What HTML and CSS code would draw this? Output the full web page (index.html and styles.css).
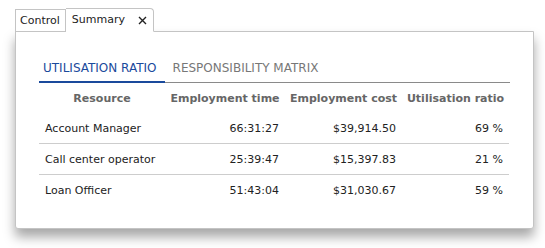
FILE: index.html
```html
<!DOCTYPE html>
<html>
<head>
<meta charset="utf-8">
<link rel="stylesheet" href="styles.css">
</head>
<body>
<div class="window">
  <div class="tabs">
    <div class="tab">Control</div>
    <div class="tab active">Summary
      <svg class="close" width="9" height="9" viewBox="0 0 9 9"><path d="M1 1 L8 8 M8 1 L1 8" stroke="#222" stroke-width="1.4" fill="none"/></svg>
    </div>
  </div>
  <div class="panel">
    <div class="subtabs">
      <div class="subtab selected">UTILISATION RATIO</div>
      <div class="subtab">RESPONSIBILITY MATRIX</div>
    </div>
    <table class="grid">
      <colgroup>
        <col class="c1"><col class="c2"><col class="c3"><col class="c4">
      </colgroup>
      <thead>
        <tr><th>Resource</th><th>Employment time</th><th>Employment cost</th><th>Utilisation ratio</th></tr>
      </thead>
      <tbody>
        <tr><td>Account Manager</td><td class="num">66:31:27</td><td class="num">$39,914.50</td><td class="num">69 %</td></tr>
        <tr><td>Call center operator</td><td class="num">25:39:47</td><td class="num">$15,397.83</td><td class="num">21 %</td></tr>
        <tr><td>Loan Officer</td><td class="num">51:43:04</td><td class="num">$31,030.67</td><td class="num">59 %</td></tr>
      </tbody>
    </table>
  </div>
</div>
</body>
</html>
```
FILE: styles.css
```css
html, body {
  margin: 0;
  padding: 0;
  background: #fff;
}
body {
  font-family: "DejaVu Sans", Verdana, sans-serif;
  font-size: 11px;
  color: #222;
  min-height: 248px;
}
.window {
  padding: 9px 0 20px 15px;
  width: 519px;
}
.tabs {
  display: flex;
  align-items: flex-end;
  height: 23px;
  margin-bottom: -1px;
  position: relative;
  z-index: 1;
}
.tab {
  height: 21px;
  line-height: 21px;
  padding: 0 5px 0 4px;
  border: 1px solid #c4c4c4;
  background: #fff;
  font-size: 11px;
  color: #222;
}
.tab.active {
  height: 22px;
  line-height: 22px;
  border-left: none;
  border-bottom-color: #fff;
  border-top-right-radius: 4px;
  padding: 0 6px 0 6px;
  display: flex;
  align-items: center;
}
.close {
  margin-left: 13px;
  margin-top: 1px;
}
.panel {
  border: 1px solid #c4c4c4;
  border-radius: 0 0 3px 3px;
  height: 196px;
  padding: 0 23px;
  box-shadow: 0 8px 12px rgba(0, 0, 0, 0.35);
  background: #fff;
}
.subtabs {
  display: flex;
  margin-top: 28px;
  border-bottom: 1px solid #8a8a8a;
  height: 22px;
}
.subtab {
  font-size: 12px;
  color: #777;
  padding: 0 5px;
  line-height: 16px;
  margin-left: 3px;
}
.subtab.selected {
  color: #1a4a9c;
  border-bottom: 2px solid #1a4a9c;
  margin-bottom: -1px;
  margin-left: 0;
  height: 21px;
  padding: 0 8px 0 4px;
}
.grid {
  border-collapse: collapse;
  table-layout: fixed;
  width: 470px;
  margin-top: 1px;
}
.c1 { width: 126px; }
.c2 { width: 120px; }
.c3 { width: 117px; }
.c4 { width: 107px; }
.grid th {
  font-weight: bold;
  color: #666;
  height: 29px;
  text-align: center;
  padding: 0;
  white-space: nowrap;
}
.grid td {
  height: 30px;
  padding: 0 6px;
  border-bottom: 1px solid #cdcdcd;
  white-space: nowrap;
}
.grid tbody tr:last-child td {
  border-bottom: none;
}
.grid td.num {
  text-align: right;
}
```
